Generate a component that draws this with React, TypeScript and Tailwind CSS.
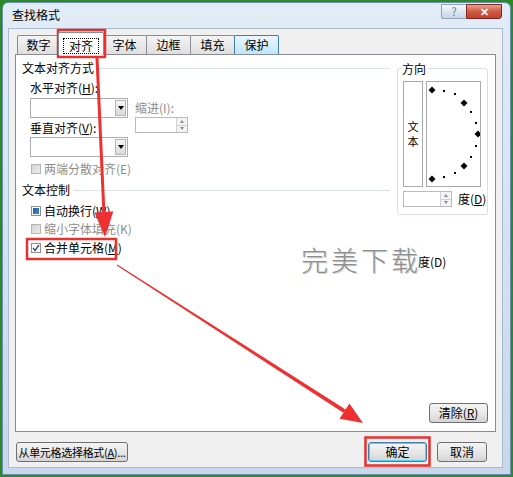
import React from "react";

function Btn({ children, className = "", primary = false }: { children: React.ReactNode; className?: string; primary?: boolean }) {
  return (
    <div
      className={
        "flex h-[20px] items-center justify-center whitespace-nowrap rounded-[3px] border bg-gradient-to-b from-[#f4f4f4] via-[#e8e8e8] to-[#d4d4d4] " +
        (primary ? "border-[#3c7fb1] shadow-[inset_0_0_0_1px_#55d0f5] " : "border-[#707070] ") +
        className
      }
    >
      {children}
    </div>
  );
}

function Dropdown() {
  return (
    <div className="flex h-[20px] w-[98px] border border-[#abadb3] bg-white">
      <div className="flex-1" />
      <div className="m-px flex w-[11px] items-center justify-center border border-[#b5b5b5] bg-gradient-to-b from-[#f6f6f6] to-[#dadada]">
        <div className="h-0 w-0 border-l-[3px] border-r-[3px] border-t-[4px] border-l-transparent border-r-transparent border-t-black" />
      </div>
    </div>
  );
}

function Spinner({ className = "" }: { className?: string }) {
  return (
    <div className={"flex h-[16px] border border-[#b8bac0] bg-white " + className}>
      <div className="flex-1" />
      <div className="flex w-[11px] flex-col border-l border-[#d0d0d0] bg-[#f4f4f4]">
        <div className="flex flex-1 items-center justify-center border-b border-[#d0d0d0]">
          <div className="h-0 w-0 border-b-[3px] border-l-[2px] border-r-[2px] border-b-[#8a8a8a] border-l-transparent border-r-transparent" />
        </div>
        <div className="flex flex-1 items-center justify-center">
          <div className="h-0 w-0 border-t-[3px] border-l-[2px] border-r-[2px] border-t-[#8a8a8a] border-l-transparent border-r-transparent" />
        </div>
      </div>
    </div>
  );
}

function Check({ kind }: { kind: "disabled" | "mixed" | "checked" }) {
  if (kind === "disabled")
    return <div className="h-[10px] w-[10px] border border-[#b4b4b4] bg-gradient-to-br from-[#d4d4d4] to-[#ececec]" />;
  if (kind === "mixed")
    return (
      <div className="flex h-[10px] w-[10px] items-center justify-center border border-[#8e8f8f] bg-white">
        <div className="h-[6px] w-[6px] bg-gradient-to-br from-[#1f5f9f] to-[#3a8ad0]" />
      </div>
    );
  return (
    <div className="flex h-[10px] w-[10px] items-center justify-center border border-[#8e8f8f] bg-white">
      <svg width="8" height="8" viewBox="0 0 8 8">
        <path d="M1 4 L3 6.5 L7 1" fill="none" stroke="#3b4f82" strokeWidth="1.4" />
      </svg>
    </div>
  );
}

function Heading({ text }: { text: string }) {
  return (
    <div className="flex h-[14px] items-center">
      <span>{text}</span>
      <div className="ml-[4px] h-px flex-1 bg-[#dde3e8]" />
    </div>
  );
}

function Tab({ label, className = "" }: { label: string; className?: string }) {
  return (
    <div
      className={
        "flex h-[19px] items-center justify-center rounded-t-[2px] border border-b-0 " + className
      }
    >
      {label}
    </div>
  );
}

function Dial() {
  const big = [
    [5, 8],
    [37, 21],
    [51, 52],
    [37, 84],
    [5, 97],
  ];
  const small = [
    [17, 9],
    [28, 12],
    [44, 30],
    [49, 41],
    [49, 64],
    [44, 75],
    [28, 91],
    [17, 95],
  ];
  return (
    <svg width="53" height="104" viewBox="0 0 53 104">
      {big.map(([x, y], i) => (
        <polygon key={i} points={`${x},${y - 3.5} ${x + 3.5},${y} ${x},${y + 3.5} ${x - 3.5},${y}`} fill="#000" />
      ))}
      {small.map(([x, y], i) => (
        <rect key={i} x={x - 1} y={y - 1} width="2" height="2" fill="#000" />
      ))}
    </svg>
  );
}

export default function App() {
  return (
    <div className="relative h-[477px] w-[513px] bg-[#2a8a2a] p-[2px] font-['Microsoft_YaHei','Noto_Sans_CJK_SC',sans-serif] text-[12px] leading-[14px] text-black">
      <div className="flex h-full w-full flex-col rounded-t-[6px] border border-[#6f8cae] bg-gradient-to-b from-[#e2ecf7] via-[#d4e2f1] to-[#c8d8ea]">
        {/* title bar */}
        <div className="flex h-[25px] items-start pl-[9px] pr-[8px]">
          <span className="mt-[5px]">查找格式</span>
          <div className="ml-auto mt-px flex">
            <div className="flex h-[15px] w-[25px] items-center justify-center rounded-bl-[3px] border border-r-0 border-[#8ea3bd] bg-gradient-to-b from-[#f3f7fb] to-[#c9d6e5] text-[11px] leading-none text-[#6a7a90]">
              ?
            </div>
            <div className="flex h-[15px] w-[36px] items-center justify-center rounded-br-[3px] border border-[#7a2a22] bg-gradient-to-b from-[#e6a092] via-[#cf5a44] to-[#c2402c] text-[11px] font-bold leading-none text-white">
              ✕
            </div>
          </div>
        </div>

        {/* client */}
        <div className="mb-[6px] ml-[5px] mr-[7px] flex flex-1 flex-col border border-[#a7bad0] bg-[#f0f0f0] px-[6px] pb-[5px] pt-[3px]">
          {/* tabs */}
          <div className="ml-[2px] flex h-[22px] items-end">
            <Tab label="数字" className="w-[43px] border-[#898c95] bg-gradient-to-b from-[#f4f4f4] to-[#dfdfdf]" />
            <div className="relative z-10 -mx-[2px] -mb-px flex h-[23px] w-[46px] items-start justify-center rounded-t-[2px] border border-b-0 border-[#898c95] bg-white pt-[5px]">
              <span className="border border-dotted border-black px-[5px]">对齐</span>
            </div>
            <Tab label="字体" className="w-[45px] border-[#898c95] bg-gradient-to-b from-[#f4f4f4] to-[#dfdfdf]" />
            <Tab label="边框" className="-ml-px w-[45px] border-[#898c95] bg-gradient-to-b from-[#f4f4f4] to-[#dfdfdf]" />
            <Tab label="填充" className="-ml-px w-[45px] border-[#898c95] bg-gradient-to-b from-[#f4f4f4] to-[#dfdfdf]" />
            <Tab label="保护" className="-ml-px w-[45px] border-[#3c7fb1] bg-gradient-to-b from-[#eaf6fd] to-[#bde6fd]" />
          </div>

          {/* panel */}
          <div className="flex flex-1 flex-col border border-[#898c95] bg-white">
            <div className="flex flex-1">
              {/* left column */}
              <div className="flex flex-1 flex-col pl-[6px] pt-[6px]">
                <Heading text="文本对齐方式" />
                <div className="mt-[6px] flex pl-[8px]">
                  <div className="flex flex-col">
                    <span>
                      水平对齐(<u>H</u>):
                    </span>
                    <div className="mt-[3px]">
                      <Dropdown />
                    </div>
                    <span className="mt-[3px]">
                      垂直对齐(<u>V</u>):
                    </span>
                    <div className="mt-[2px]">
                      <Dropdown />
                    </div>
                  </div>
                  <div className="ml-[7px] flex flex-col pt-[20px]">
                    <span className="text-[#8d8d8d]">缩进(I):</span>
                    <Spinner className="mt-[2px] w-[53px]" />
                  </div>
                </div>
                <div className="mt-[5px] flex h-[14px] items-center gap-[3px] pl-[9px] text-[#8d8d8d]">
                  <Check kind="disabled" />
                  <span>两端分散对齐(E)</span>
                </div>
                <div className="mt-[7px]">
                  <Heading text="文本控制" />
                </div>
                <div className="mt-[7px] flex h-[14px] items-center gap-[3px] pl-[9px]">
                  <Check kind="mixed" />
                  <span>
                    自动换行(<u>W</u>)
                  </span>
                </div>
                <div className="mt-[4px] flex h-[14px] items-center gap-[3px] pl-[9px] text-[#8d8d8d]">
                  <Check kind="disabled" />
                  <span>缩小字体填充(K)</span>
                </div>
                <div className="mt-[5px] flex h-[14px] items-center gap-[3px] pl-[9px]">
                  <Check kind="checked" />
                  <span>
                    合并单元格(<u>M</u>)
                  </span>
                </div>
              </div>

              {/* orientation group */}
              <div className="ml-[7px] mr-[7px] mt-[13px] flex h-[147px] w-[91px] flex-col rounded-[3px] border border-[#d5dfe5] pb-[6px] pl-[5px]">
                <span className="-mt-[7px] ml-[-1px] w-fit bg-white pr-[2px]">方向</span>
                <div className="mt-[5px] flex gap-[3px]">
                  <div className="flex h-[106px] w-[20px] flex-col items-center justify-center gap-[2px] border border-[#a9a9a9] text-[11px] leading-[13px]">
                    <span>文</span>
                    <span>本</span>
                  </div>
                  <div className="flex h-[106px] w-[55px] items-center justify-center border border-[#a9a9a9]">
                    <Dial />
                  </div>
                </div>
                <div className="mt-[4px] flex items-center">
                  <Spinner className="w-[49px]" />
                  <span className="ml-[6px]">
                    度(<u>D</u>)
                  </span>
                </div>
              </div>
            </div>
            <div className="mb-[8px] mr-[7px] flex justify-end">
              <Btn className="w-[59px] text-[12px]">
                清除(<u>R</u>)
              </Btn>
            </div>
          </div>

          {/* bottom buttons */}
          <div className="mt-[10px] flex">
            <Btn className="ml-px w-[112px] text-[11px] tracking-[-0.3px]">
              从单元格选择格式(<u>A</u>)...
            </Btn>
            <Btn primary className="ml-auto w-[59px] text-[12px]">
              确定
            </Btn>
            <Btn className="ml-[10px] mr-[9px] w-[50px] text-[12px]">取消</Btn>
          </div>
        </div>
      </div>

      {/* watermark */}
      <div className="pointer-events-none absolute left-[301px] top-[245px] text-[27px] font-light leading-[30px] tracking-[3px] text-[#8e8e8e] [text-shadow:1px_1px_0_#d2d2d2]">
        完美下载
      </div>
      <div className="pointer-events-none absolute left-[418px] top-[255px] text-[12px]">度(D)</div>

      {/* annotations */}
      <svg className="pointer-events-none absolute left-0 top-0" width="513" height="477" viewBox="0 0 513 477">
        <rect x="58" y="30" width="47" height="27" fill="none" stroke="#e8312f" strokeWidth="2.5" />
        <rect x="27" y="239" width="89" height="20" fill="none" stroke="#e8312f" strokeWidth="2.5" />
        <rect x="365.5" y="437.5" width="64" height="28" fill="none" stroke="#e8312f" strokeWidth="2.5" />
        <polygon points="95.5,58 98.5,58 105.4,212 102.4,212" fill="#ee3030" />
        <polygon points="94.5,212.4 113.3,211.6 105,237" fill="#ee3030" />
        <polygon points="116.7,265.4 117.3,264.6 345.6,409.4 343.4,412.8" fill="#ee3030" />
        <polygon points="339.6,418.7 349.4,403.5 363,423" fill="#ee3030" />
      </svg>
    </div>
  );
}
